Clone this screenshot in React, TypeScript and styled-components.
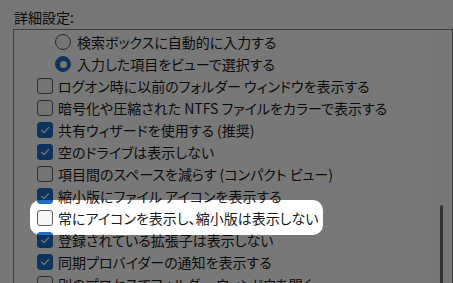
import React from 'react';
import styled, { createGlobalStyle } from 'styled-components';

const GlobalStyle = createGlobalStyle`
  body {
    margin: 0;
    font-family: "Noto Sans CJK JP", "Noto Sans", sans-serif;
    font-feature-settings: "palt";
    color: #1a1a1a;
  }
`;

const Page = styled.div`
  height: 283px;
  overflow: hidden;
  background: #fbfbfb;
  padding: 8px 0 0 13px;
  box-sizing: border-box;
  position: relative;
`;

const Title = styled.div`
  font-size: 14px;
  line-height: 18px;
  padding-left: 1px;
  margin-bottom: 3px;
`;

const ListBox = styled.div`
  display: flex;
  width: 440px;
  height: 300px;
  box-sizing: border-box;
  border: 1px solid #858585;
  border-bottom: none;
  background: #ffffff;
`;

const Items = styled.div`
  flex: 1;
  padding: 1px 0 0 23px;
`;

const Row = styled.div<{ $indent?: boolean; $spot?: boolean }>`
  position: relative;
  display: flex;
  align-items: center;
  height: 22px;
  gap: ${p => (p.$indent ? 6 : 5)}px;
  padding-left: ${p => (p.$indent ? 18 : 0)}px;
  font-size: 14px;
  white-space: nowrap;

  ${p =>
    p.$spot &&
    `
    &::after {
      content: '';
      position: absolute;
      left: -7px;
      top: -7px;
      width: 293px;
      height: 35px;
      border-radius: 10px;
      box-shadow: 0 0 0 2000px rgba(0, 0, 0, 0.53);
      pointer-events: none;
      z-index: 5;
    }
  `}
`;

const Box = styled.span<{ $on?: boolean }>`
  flex: none;
  display: flex;
  align-items: center;
  justify-content: center;
  width: 16px;
  height: 16px;
  box-sizing: border-box;
  border-radius: 3px;
  border: 1px solid ${p => (p.$on ? '#1f6fc6' : '#5e5e5e')};
  background: ${p => (p.$on ? '#1f6fc6' : '#f6f6f6')};
`;

const Radio = styled.span<{ $on?: boolean }>`
  flex: none;
  display: flex;
  align-items: center;
  justify-content: center;
  width: 16px;
  height: 16px;
  box-sizing: border-box;
  border-radius: 50%;
  border: 1px solid ${p => (p.$on ? '#1f6fc6' : '#5e5e5e')};
  background: ${p => (p.$on ? '#1f6fc6' : '#f6f6f6')};

  &::before {
    content: '';
    display: ${p => (p.$on ? 'block' : 'none')};
    width: 7px;
    height: 7px;
    border-radius: 50%;
    background: #ffffff;
  }
`;

const Track = styled.div`
  width: 21px;
  flex: none;
  background: #fdfdfd;
`;

const Thumb = styled.div`
  width: 3px;
  height: 120px;
  margin: 175px 0 0 9px;
  border-radius: 2px;
  background: #6c6c6c;
`;

const Check = () => (
  <svg width="12" height="12" viewBox="0 0 12 12">
    <path d="M2.6 6.3 L5 8.6 L9.6 3.6" fill="none" stroke="#ffffff" strokeWidth="1.2" strokeLinecap="round" strokeLinejoin="round" />
  </svg>
);

type Item = { kind: 'radio' | 'check'; on: boolean; label: string; spot?: boolean };

const items: Item[] = [
  { kind: 'radio', on: false, label: '検索ボックスに自動的に入力する' },
  { kind: 'radio', on: true, label: '入力した項目をビューで選択する' },
  { kind: 'check', on: false, label: 'ログオン時に以前のフォルダー ウィンドウを表示する' },
  { kind: 'check', on: false, label: '暗号化や圧縮された NTFS ファイルをカラーで表示する' },
  { kind: 'check', on: true, label: '共有ウィザードを使用する (推奨)' },
  { kind: 'check', on: true, label: '空のドライブは表示しない' },
  { kind: 'check', on: false, label: '項目間のスペースを減らす (コンパクト ビュー)' },
  { kind: 'check', on: true, label: '縮小版にファイル アイコンを表示する' },
  { kind: 'check', on: false, label: '常にアイコンを表示し、縮小版は表示しない', spot: true },
  { kind: 'check', on: true, label: '登録されている拡張子は表示しない' },
  { kind: 'check', on: true, label: '同期プロバイダーの通知を表示する' },
  { kind: 'check', on: false, label: '別のプロセスでフォルダー ウィンドウを開く' },
];

const App: React.FC = () => (
  <>
    <GlobalStyle />
    <Page>
      <Title>詳細設定:</Title>
      <ListBox>
        <Items>
          {items.map(item => (
            <Row key={item.label} $indent={item.kind === 'radio'} $spot={item.spot}>
              {item.kind === 'radio' ? (
                <Radio $on={item.on} />
              ) : (
                <Box $on={item.on}>{item.on && <Check />}</Box>
              )}
              <span>{item.label}</span>
            </Row>
          ))}
        </Items>
        <Track>
          <Thumb />
        </Track>
      </ListBox>
    </Page>
  </>
);

export default App;
